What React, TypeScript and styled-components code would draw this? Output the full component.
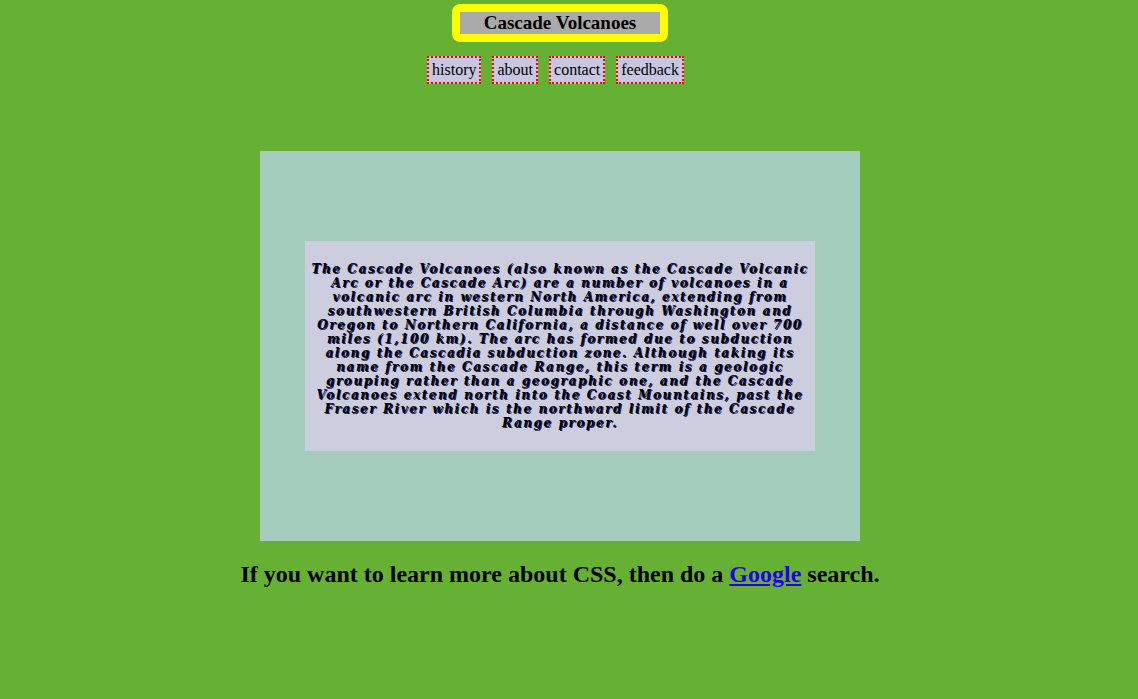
import React from "react";
import styled, { createGlobalStyle } from "styled-components";

const Global = createGlobalStyle`
  html, body { margin: 0; padding: 0; background: #66b033; }
  body { font-family: "Liberation Serif", "Times New Roman", serif; color: #000; }
`;

const Page = styled.div`
  display: flex;
  flex-direction: column;
  align-items: center;
  padding: 4px 18px 0 0;
  min-height: 699px;
  box-sizing: border-box;
`;

const TitleFrame = styled.div`
  border: 8px solid #ffff00;
  border-radius: 8px;
  background: #aaaaaa;
  width: 200px;
  height: 22px;
  display: flex;
  align-items: center;
  justify-content: center;
`;

const Title = styled.h1`
  margin: 0;
  font-size: 19px;
  font-weight: bold;
  line-height: 22px;
`;

const Nav = styled.nav`
  display: flex;
  gap: 11px;
  margin-top: 14px;
  padding-right: 9px;
`;

const NavItem = styled.span`
  display: block;
  border: 2px dotted #ff0000;
  background: #c8c6e0;
  padding: 0 3px;
  height: 24px;
  line-height: 24px;
  font-size: 16px;
  color: #000;
`;

const Outer = styled.section`
  margin-top: 67px;
  width: 600px;
  height: 390px;
  box-sizing: border-box;
  background: #a5cdbd;
  padding: 90px 45px;
`;

const Inner = styled.div`
  height: 210px;
  background: #cdcde0;
  display: flex;
  align-items: center;
  justify-content: center;
  padding: 0 4px;
  box-sizing: border-box;
`;

const Para = styled.p`
  margin: 0;
  text-align: center;
  font-family: "DejaVu Serif", serif;
  font-style: italic;
  font-weight: bold;
  font-size: 12px;
  line-height: 14px;
  letter-spacing: 1.6px;
  color: #000;
  text-shadow: 1px 1px 0 #1a1a70;
`;

const Footer = styled.h2`
  margin: 19px 0 0;
  font-size: 24px;
  font-weight: bold;
  line-height: 28px;
  text-align: center;
`;

const Link = styled.a`
  color: #2200ee;
  text-decoration: underline;
`;

export default function App() {
  return (
    <>
      <Global />
      <Page>
        <TitleFrame>
          <Title>Cascade Volcanoes</Title>
        </TitleFrame>
        <Nav>
          {["history", "about", "contact", "feedback"].map((n) => (
            <NavItem key={n}>{n}</NavItem>
          ))}
        </Nav>
        <Outer>
          <Inner>
            <Para>
              The Cascade Volcanoes (also known as the Cascade Volcanic Arc or the Cascade Arc) are a
              number of volcanoes in a volcanic arc in western North America, extending from
              southwestern British Columbia through Washington and Oregon to Northern California, a
              distance of well over 700 miles (1,100 km). The arc has formed due to subduction along
              the Cascadia subduction zone. Although taking its name from the Cascade Range, this term
              is a geologic grouping rather than a geographic one, and the Cascade Volcanoes extend
              north into the Coast Mountains, past the Fraser River which is the northward limit of
              the Cascade Range proper.
            </Para>
          </Inner>
        </Outer>
        <Footer>
          If you want to learn more about CSS, then do a <Link href="#">Google</Link> search.
        </Footer>
      </Page>
    </>
  );
}
